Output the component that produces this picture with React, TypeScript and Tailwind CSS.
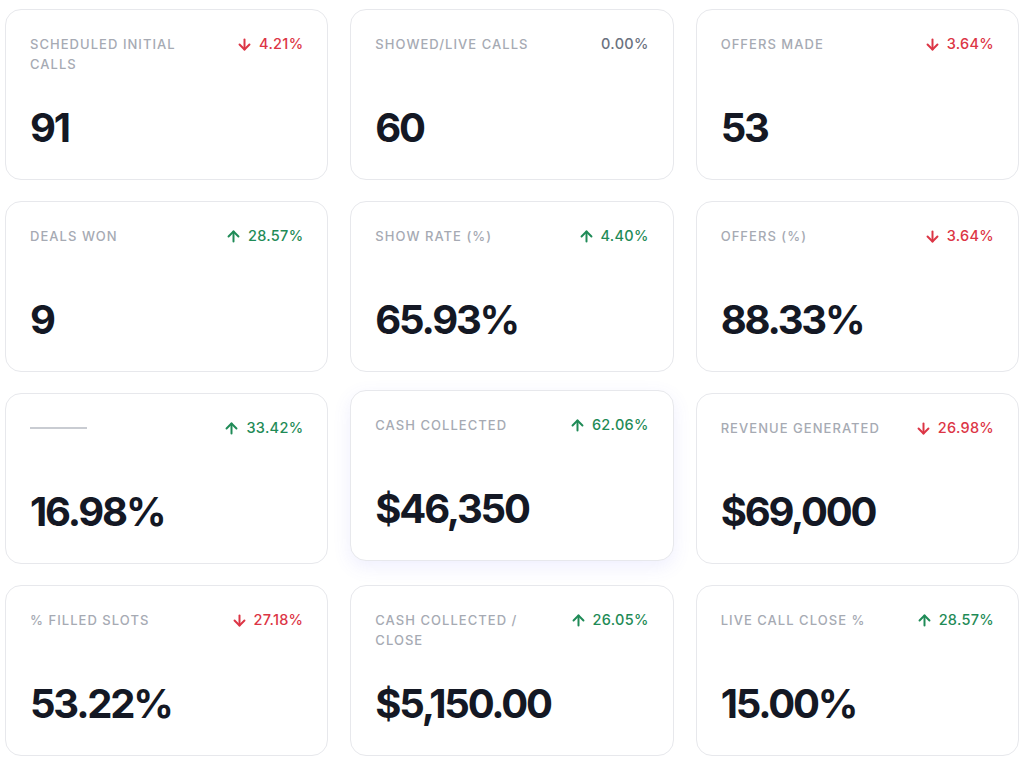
import { ArrowDown, ArrowUp } from "lucide-react";

type Trend = "up" | "down" | "flat";

interface Metric {
  label: string;
  value: string;
  change: string;
  trend: Trend;
  raised?: boolean;
}

const metrics: Metric[] = [
  { label: "Scheduled Initial Calls", value: "91", change: "4.21%", trend: "down" },
  { label: "Showed/Live Calls", value: "60", change: "0.00%", trend: "flat" },
  { label: "Offers Made", value: "53", change: "3.64%", trend: "down" },
  { label: "Deals Won", value: "9", change: "28.57%", trend: "up" },
  { label: "Show Rate (%)", value: "65.93%", change: "4.40%", trend: "up" },
  { label: "Offers (%)", value: "88.33%", change: "3.64%", trend: "down" },
  { label: "", value: "16.98%", change: "33.42%", trend: "up" },
  { label: "Cash Collected", value: "$46,350", change: "62.06%", trend: "up", raised: true },
  { label: "Revenue Generated", value: "$69,000", change: "26.98%", trend: "down" },
  { label: "% Filled Slots", value: "53.22%", change: "27.18%", trend: "down" },
  { label: "Cash Collected / Close", value: "$5,150.00", change: "26.05%", trend: "up" },
  { label: "Live Call Close %", value: "15.00%", change: "28.57%", trend: "up" },
];

function TrendBadge({ change, trend }: { change: string; trend: Trend }) {
  if (trend === "flat") {
    return (
      <span className="text-[14.5px] font-medium leading-[20px] tracking-[0.02em] text-[#6b7280]">
        {change}
      </span>
    );
  }
  const isUp = trend === "up";
  return (
    <span
      className={`flex items-center gap-[6px] text-[14.5px] font-medium leading-[20px] tracking-[0.02em] ${
        isUp ? "text-[#1f8b57]" : "text-[#dc3545]"
      }`}
    >
      {isUp ? (
        <ArrowUp className="h-[17px] w-[17px]" strokeWidth={2.8} />
      ) : (
        <ArrowDown className="h-[17px] w-[17px]" strokeWidth={2.8} />
      )}
      {change}
    </span>
  );
}

function MetricCard({ metric }: { metric: Metric }) {
  return (
    <div
      className={`flex h-[171px] flex-col justify-between rounded-[16px] border border-[#e7e8ec] bg-white px-[24px] pt-[24px] pb-[31px] ${
        metric.raised ? "-translate-y-[3px] shadow-[0_6px_18px_rgba(99,102,241,0.10)]" : ""
      }`}
    >
      <div className="flex items-start justify-between gap-4">
        {metric.label ? (
          <span className="max-w-[178px] text-[13px] font-medium uppercase leading-[20px] tracking-[0.08em] text-[#a6aab3]">
            {metric.label}
          </span>
        ) : (
          <span className="mt-[9px] h-[2px] w-[57px] bg-[#c9ccd2]" />
        )}
        <TrendBadge change={metric.change} trend={metric.trend} />
      </div>
      <div className="text-[40px] font-bold leading-none tracking-[-0.055em] text-[#141824]">
        {metric.value}
      </div>
    </div>
  );
}

export default function App() {
  return (
    <div
      className="min-h-screen bg-white pl-[5px] pr-[5px] pt-[9px]"
      style={{ fontFamily: "Inter, 'Noto Sans', sans-serif" }}
    >
      <div className="grid w-[1014px] grid-cols-3 gap-x-[22px] gap-y-[21px]">
        {metrics.map((m, i) => (
          <MetricCard key={i} metric={m} />
        ))}
      </div>
    </div>
  );
}
